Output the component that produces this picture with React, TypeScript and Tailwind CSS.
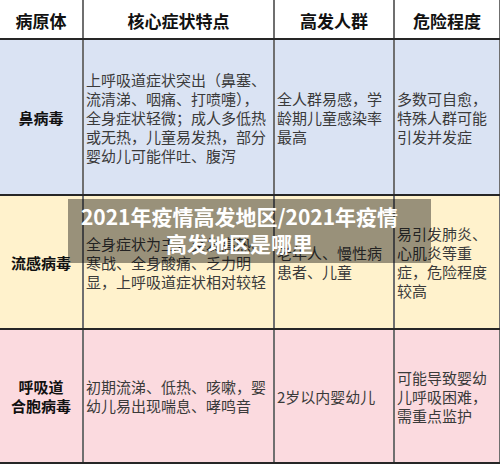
import React from 'react';

type Row = {
  bg: string;
  name: string[];
  symptoms: string[];
  people: string[];
  risk: string[];
};

const rows: Row[] = [
  {
    bg: 'bg-[#dae3f3]',
    name: ['鼻病毒'],
    symptoms: [
      '上呼吸道症状突出（鼻塞、',
      '流清涕、咽痛、打喷嚏），',
      '全身症状轻微；成人多低热',
      '或无热，儿童易发热，部分',
      '婴幼儿可能伴吐、腹泻',
    ],
    people: ['全人群易感，学', '龄期儿童感染率', '最高'],
    risk: ['多数可自愈，', '特殊人群可能', '引发并发症'],
  },
  {
    bg: 'bg-[#fff2cc]',
    name: ['流感病毒'],
    symptoms: ['全身症状为主，突发高热、', '寒战、全身酸痛、乏力明', '显，上呼吸道症状相对较轻'],
    people: ['老年人、慢性病', '患者、儿童'],
    risk: ['易引发肺炎、', '心肌炎等重', '症，危险程度', '较高'],
  },
  {
    bg: 'bg-[#fbdadf]',
    name: ['呼吸道', '合胞病毒'],
    symptoms: ['初期流涕、低热、咳嗽，婴', '幼儿易出现喘息、哮鸣音'],
    people: ['2岁以内婴幼儿'],
    risk: ['可能导致婴幼', '儿呼吸困难，', '需重点监护'],
  },
];

const heights = ['h-[156px]', 'h-[134px]', 'h-[134px]'];

function Lines({ lines }: { lines: string[] }) {
  return (
    <div>
      {lines.map((l, i) => (
        <div key={i} className="whitespace-nowrap">{l}</div>
      ))}
    </div>
  );
}

export default function App() {
  return (
    <div
      className="relative w-[500px] h-[464px] overflow-hidden bg-white"
      style={{ fontFamily: '"Noto Sans CJK SC", "Noto Sans", sans-serif' }}
    >
      <div className="w-[501px]">
        {/* header */}
        <div className="grid grid-cols-[84px_191px_120px_106px] h-[40px] bg-white border-b-2 border-[#262626] text-[17px] font-bold text-[#111] leading-none">
          <div className="flex items-center justify-center pt-[3px] border-r-2 border-[#6f6f6f]">病原体</div>
          <div className="flex items-center justify-center pt-[3px] border-r-2 border-[#6f6f6f]">核心症状特点</div>
          <div className="flex items-center justify-center pt-[3px] border-r-2 border-[#6f6f6f]">高发人群</div>
          <div className="flex items-center justify-center pt-[3px] border-r-2 border-[#6f6f6f]">危险程度</div>
        </div>

        {rows.map((r, i) => (
          <div
            key={i}
            className={`grid grid-cols-[84px_191px_120px_106px] ${heights[i]} ${r.bg} border-b-2 border-[#262626] text-[15px] leading-[19px] text-[#3a3a3a]`}
          >
            <div className="flex items-center justify-center text-center font-bold text-[#111] border-r-2 border-[#6f6f6f]">
              <Lines lines={r.name} />
            </div>
            <div className="flex items-center pl-[2px] border-r-2 border-[#6f6f6f]">
              <Lines lines={r.symptoms} />
            </div>
            <div className="flex items-center pl-[2px] border-r-2 border-[#6f6f6f]">
              <Lines lines={r.people} />
            </div>
            <div className="flex items-center pl-[2px] border-r-2 border-[#6f6f6f]">
              <Lines lines={r.risk} />
            </div>
          </div>
        ))}
      </div>

      {/* title banner over the table */}
      <div className="absolute left-[68px] top-[199px] w-[363px] h-[64px] bg-black/40 pr-[20px] pt-[4px] text-center text-white font-bold text-[21px] leading-[27px]">
        <div>2021年疫情高发地区/2021年疫情</div>
        <div>高发地区是哪里</div>
      </div>
    </div>
  );
}
